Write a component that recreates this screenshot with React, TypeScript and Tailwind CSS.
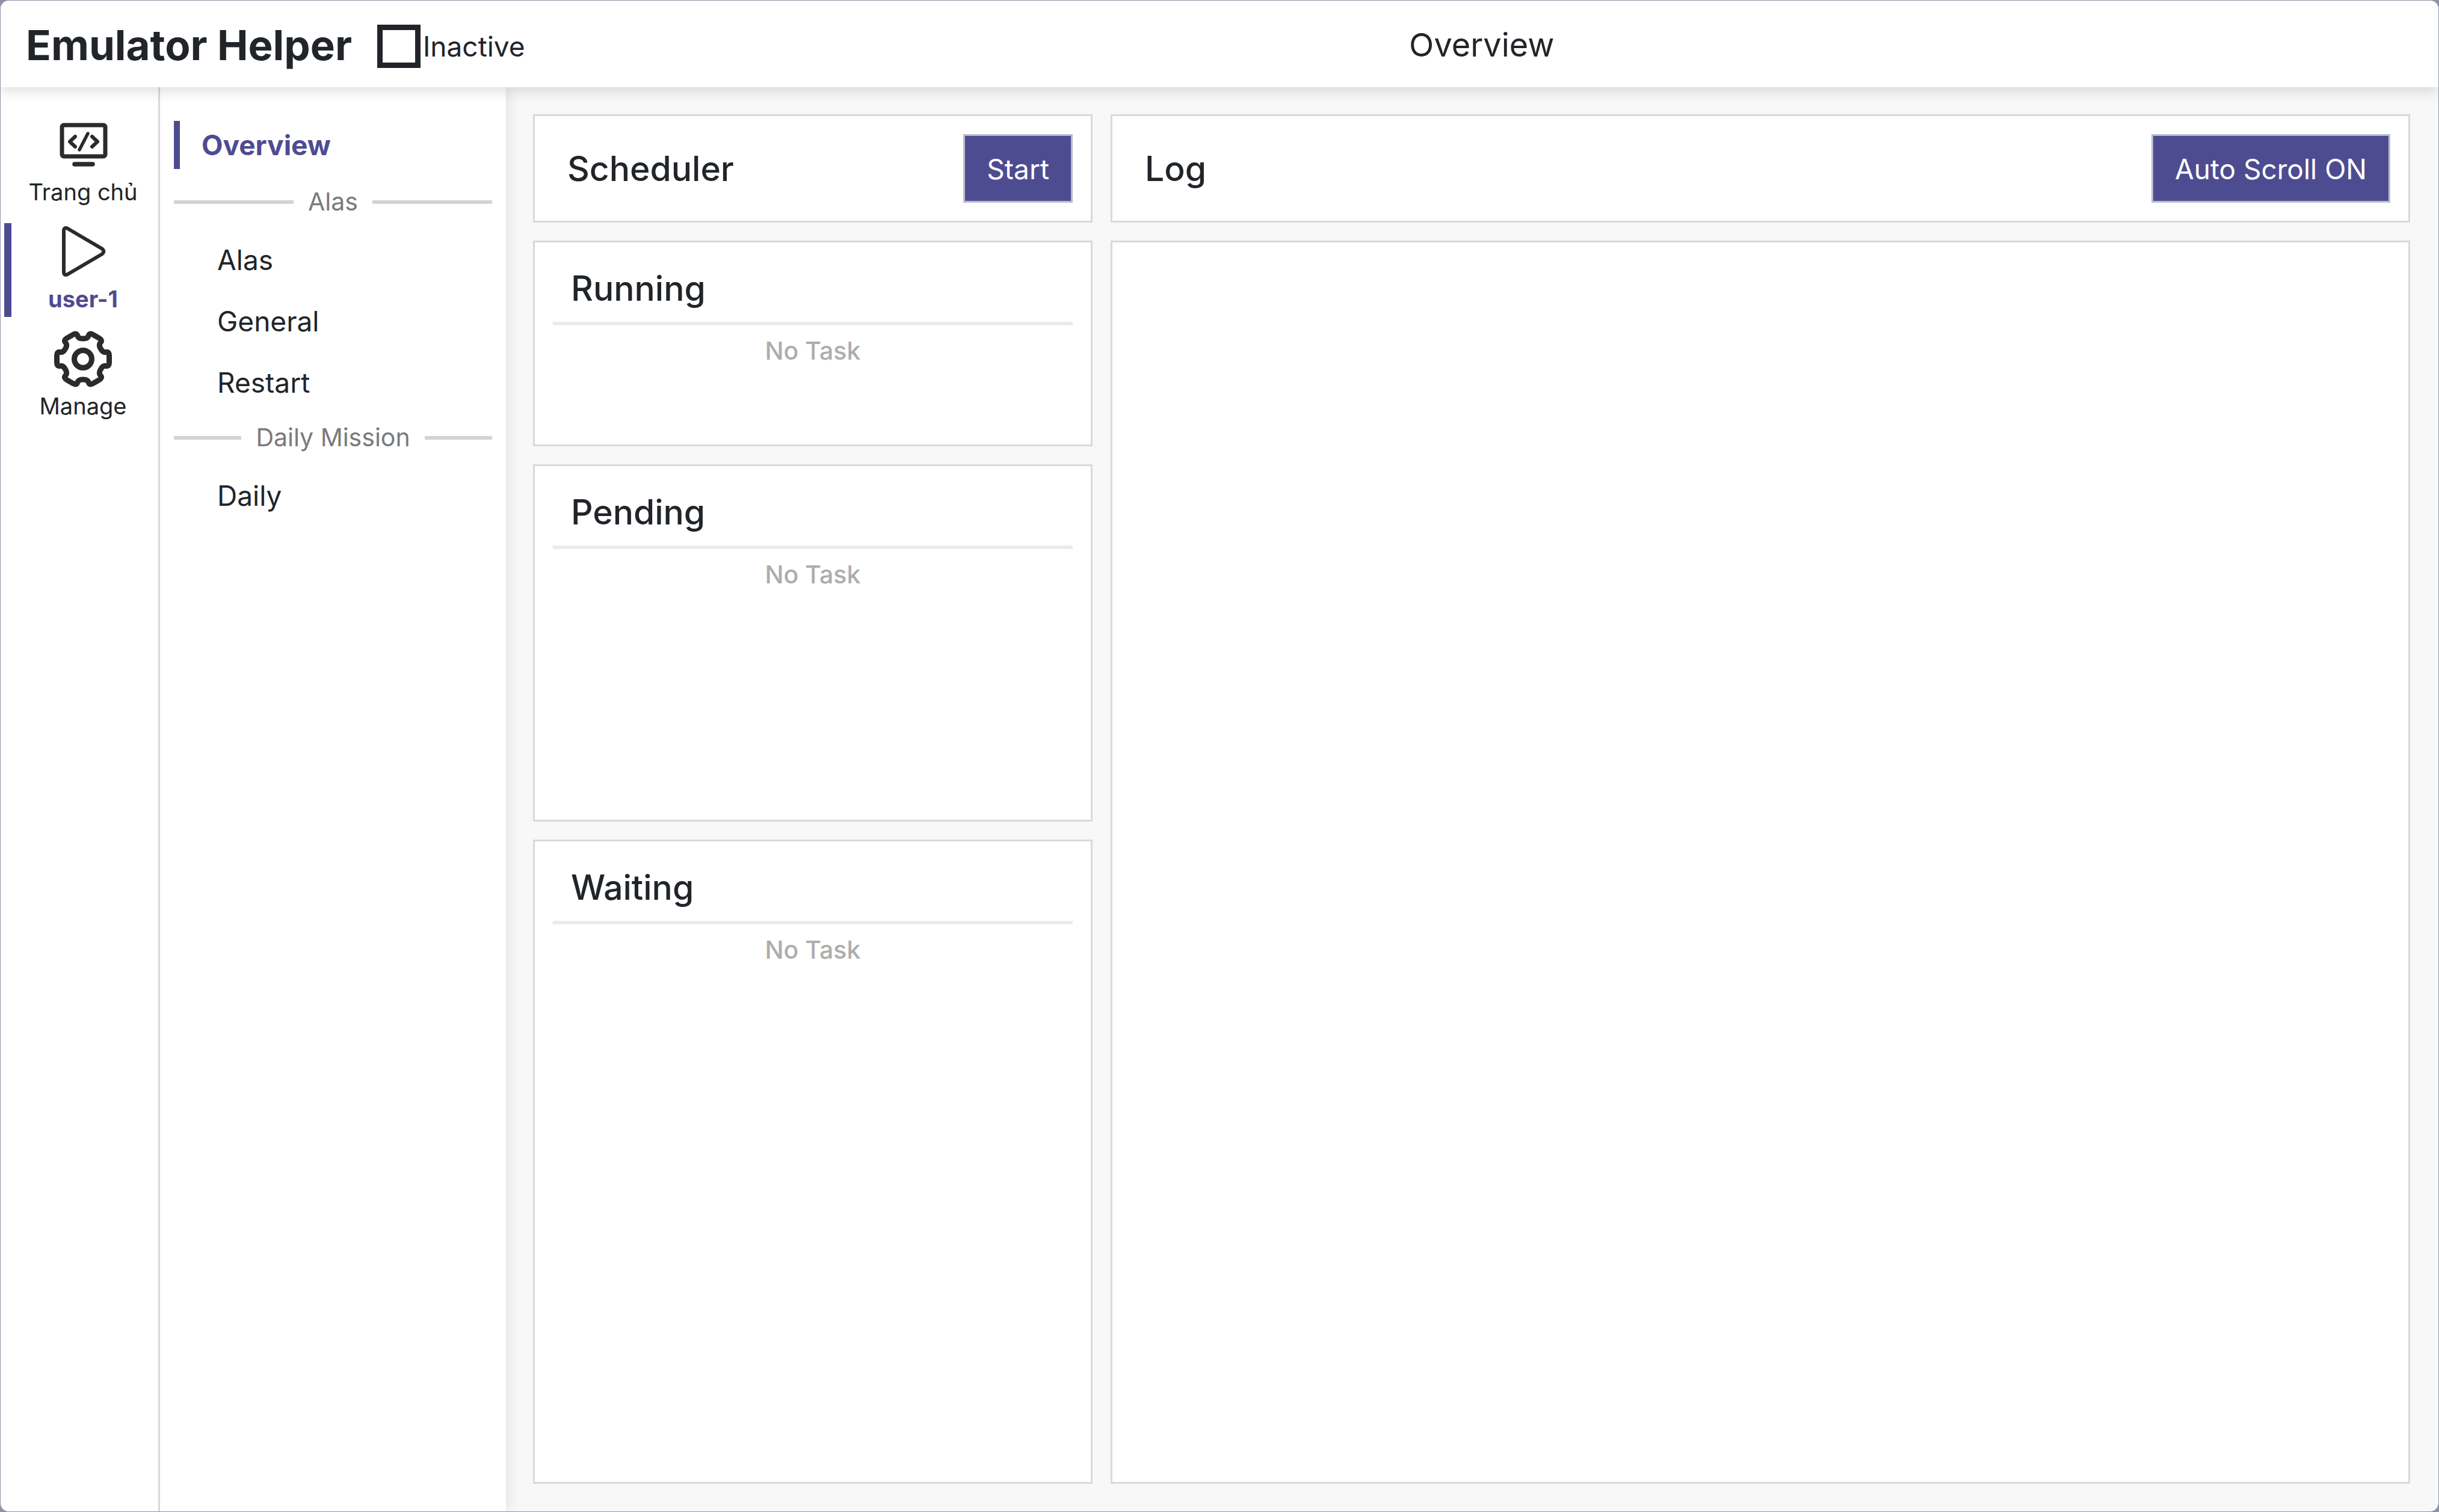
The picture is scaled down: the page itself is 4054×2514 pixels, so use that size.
import { useState } from "react";
import type { ReactNode } from "react";
import clsx from "clsx";

type Point = [number, number];

function roundedPath(points: Point[], radius: number) {
  const n = points.length;
  const toward = (a: Point, b: Point): Point => {
    const d = Math.hypot(b[0] - a[0], b[1] - a[1]);
    const t = Math.min(radius / d, 0.46);
    return [a[0] + (b[0] - a[0]) * t, a[1] + (b[1] - a[1]) * t];
  };
  return (
    points
      .map((p, i) => {
        const a = toward(p, points[(i + n - 1) % n]);
        const b = toward(p, points[(i + 1) % n]);
        return `${i ? "L" : "M"}${a.join(" ")}Q${p.join(" ")} ${b.join(" ")}`;
      })
      .join("") + "Z"
  );
}

function polar(distance: number, side: number, degrees: number): Point {
  const a = (degrees * Math.PI) / 180;
  return [
    48 + distance * Math.cos(a) - side * Math.sin(a),
    48 + distance * Math.sin(a) + side * Math.cos(a),
  ];
}

const gearPath = roundedPath(
  [0, 60, 120, 180, 240, 300].flatMap((angle) => [
    polar(43.5, -12.5, angle),
    polar(43.5, 12.5, angle),
    polar(34, -7.5, angle + 30),
    polar(34, 7.5, angle + 30),
  ]),
  7,
);

function MonitorIcon() {
  return (
    <svg viewBox="0 0 96 96" className="size-24" fill="none" stroke="#2b2b2b" strokeLinecap="round" strokeLinejoin="round" aria-hidden="true">
      <rect x="13" y="15" width="72" height="52" rx="3" strokeWidth="7" />
      <path d="M34 80H64" strokeWidth="7.5" />
      <path d="M35 34L26 42.5L35 51M63 34L72 42.5L63 51" strokeWidth="6" />
      <path d="M56 29L42 56" strokeWidth="5.5" />
    </svg>
  );
}

function PlayIcon() {
  return (
    <svg viewBox="0 0 96 96" className="size-24" fill="none" stroke="#2b2b2b" strokeWidth="6" strokeLinejoin="round" aria-hidden="true">
      <path d="M16 13Q16 6 22.500 9L79.500 42.500Q85 47 79.500 51.500L22.500 85Q16 88 16 81Z" />
    </svg>
  );
}

function GearIcon() {
  return (
    <svg viewBox="0 0 96 96" className="size-24" fill="none" stroke="#2b2b2b" strokeWidth="9" strokeLinejoin="round" aria-hidden="true">
      <path d={gearPath} />
      <circle cx="48" cy="48" r="14.5" />
    </svg>
  );
}

const railItems = [
  { label: "Trang chủ", icon: <MonitorIcon /> },
  { label: "user-1", icon: <PlayIcon /> },
  { label: "Manage", icon: <GearIcon /> },
];

const menuGroups = [
  { title: "Alas", items: ["Alas", "General", "Restart"] },
  { title: "Daily Mission", items: ["Daily"] },
];

const card = "border-3 border-[#d9d9d9] bg-white";

function HeaderCard({ title, children }: { title: string; children: ReactNode }) {
  return (
    <section className={clsx(card, "flex items-center justify-between p-[30px] pl-[54px]")}>
      <h2 className="pt-0.5 text-[57px] leading-[70px] font-medium">{title}</h2>
      {children}
    </section>
  );
}

function ActionButton({ children, onClick }: { children: ReactNode; onClick?: () => void }) {
  return (
    <button
      type="button"
      onClick={onClick}
      className="border-3 border-[#bdbccf] bg-[#4e4c91] px-9 pt-0.5 text-[46px] leading-[106px] text-white"
    >
      {children}
    </button>
  );
}

function TaskCard({ title, className }: { title: string; className: string }) {
  return (
    <section className={clsx(card, "px-[30px] pt-[42px]", className)}>
      <h2 className="mb-5 px-[30px] text-[57px] leading-[70px] font-medium">{title}</h2>
      <hr className="border-t-6 border-[#e9ecef]" />
      <p className="mt-3 text-center text-[41px] leading-[60px] font-medium text-[#adadad]">No Task</p>
    </section>
  );
}

export default function App() {
  const [page, setPage] = useState("Overview");
  const [section, setSection] = useState("user-1");
  const [autoScroll, setAutoScroll] = useState(true);

  return (
    <div className="flex min-h-screen flex-col bg-[#9093a8] p-px font-['Inter',sans-serif] text-[#212529]">
      <div className="flex flex-1 flex-col overflow-hidden rounded-[14px] bg-[#f8f8f8]">
        <header className="relative z-20 flex h-36 items-center bg-white pt-1 pl-[42px] shadow-[0_8px_20px_rgba(0,0,0,0.12)]">
          <h1 className="text-[69px] leading-[80px] font-bold">Emulator Helper</h1>
          <label className="ml-[42px] flex items-center gap-1 pt-1 text-[46px] leading-[60px]">
            <input type="checkbox" className="size-[72px] appearance-none border-9 border-[#212529] checked:bg-[#212529]" />
            Inactive
          </label>
          <p className="flex-1 text-center text-[54px] leading-[70px]">{page}</p>
        </header>

        <div className="flex flex-1">
          <nav aria-label="Sections" className="relative z-10 flex w-[265px] flex-col gap-[22px] border-r-3 border-[#d9d9d9] bg-white px-1.5 pt-12">
            {railItems.map(({ label, icon }) => (
              <button
                key={label}
                type="button"
                onClick={() => setSection(label)}
                className={clsx(
                  "flex flex-col items-center border-l-12 text-[38px] leading-[60px]",
                  section === label ? "border-[#4e4c91] font-bold text-[#4e4c91]" : "border-transparent",
                )}
              >
                {icon}
                {label}
              </button>
            ))}
          </nav>

          <nav aria-label="Pages" className="flex w-[575px] flex-col bg-white px-[23px] pt-14 shadow-[0_0_24px_rgba(0,0,0,0.12)]">
            <button
              type="button"
              onClick={() => setPage("Overview")}
              className={clsx(
                "mb-3.5 h-20 border-l-10 pl-9 text-left text-[46px]",
                page === "Overview" ? "border-[#4e4c91] font-bold text-[#4e4c91]" : "border-transparent",
              )}
            >
              Overview
            </button>
            {menuGroups.map((group) => (
              <section key={group.title} className="flex flex-col gap-[22px] pb-[11px]">
                <h3 className="-mb-[7px] flex h-[82px] items-center gap-6 text-[41px] text-[#7a7a7a] before:h-1.5 before:flex-1 before:bg-[#d3d3d3] after:h-1.5 after:flex-1 after:bg-[#d3d3d3]">
                  {group.title}
                </h3>
                {group.items.map((item) => (
                  <button
                    key={item}
                    type="button"
                    onClick={() => setPage(item)}
                    className={clsx(
                      "h-20 border-l-10 pl-[62px] text-left text-[46px]",
                      page === item ? "border-[#4e4c91] font-bold text-[#4e4c91]" : "border-transparent",
                    )}
                  >
                    {item}
                  </button>
                ))}
              </section>
            ))}
          </nav>

          <main className="flex flex-1 gap-[30px] pt-[45px] pr-[47px] pb-[46px] pl-[45px]">
            <div className="flex w-[930px] flex-col gap-[30px]">
              <HeaderCard title="Scheduler">
                <ActionButton>Start</ActionButton>
              </HeaderCard>
              <TaskCard title="Running" className="min-h-[342px]" />
              <TaskCard title="Pending" className="min-h-[594px]" />
              <TaskCard title="Waiting" className="flex-1" />
            </div>
            <div className="flex flex-1 flex-col gap-[30px]">
              <HeaderCard title="Log">
                <ActionButton onClick={() => setAutoScroll(!autoScroll)}>
                  {autoScroll ? "Auto Scroll ON" : "Auto Scroll OFF"}
                </ActionButton>
              </HeaderCard>
              <section aria-label="Log output" className={clsx(card, "flex-1")} />
            </div>
          </main>
        </div>
      </div>
    </div>
  );
}
